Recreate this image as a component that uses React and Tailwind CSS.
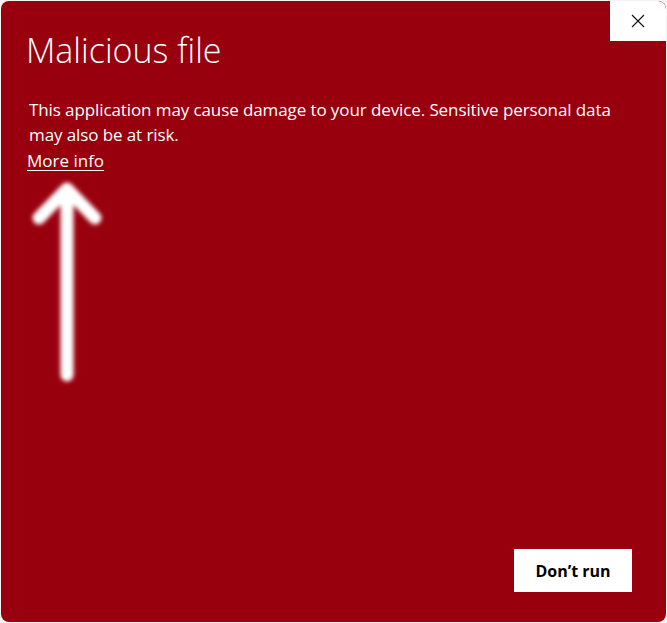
import React from 'react';

function UpArrow() {
  return (
    <svg width="80" height="210" viewBox="0 0 80 210" className="block">
      <defs>
        <filter id="glow" x="-50%" y="-20%" width="200%" height="140%">
          <feGaussianBlur stdDeviation="2.2" />
        </filter>
      </defs>
      <g filter="url(#glow)" stroke="#ffffff" strokeWidth="13" strokeLinecap="round" strokeLinejoin="round" fill="none">
        <path d="M40 14 L40 198" />
        <path d="M12 41 L40 12 L68 41" />
      </g>
    </svg>
  );
}

export default function App() {
  return (
    <div className="w-[667px] h-[623px] bg-[#f3f3f3] p-px" style={{ fontFamily: '"Open Sans", "Noto Sans", sans-serif' }}>
      <div className="h-full w-full rounded-lg bg-[#99000e] flex flex-col overflow-hidden">
        <div className="flex items-start">
          <h1 className="flex-1 pl-[25px] pt-[27px] text-[34px] font-light leading-[45px] text-white">
            Malicious file
          </h1>
          <button type="button" className="w-[56px] h-[40px] bg-white rounded-tr-lg flex items-center justify-center">
            <svg width="14" height="14" viewBox="0 0 14 14">
              <path d="M1 1 L13 13 M13 1 L1 13" stroke="#111" strokeWidth="1.1" />
            </svg>
          </button>
        </div>

        <div className="pl-[28px] pr-[40px] mt-[24px] text-[17px] leading-[25px] text-white tracking-[-0.1px]">
          <p>This application may cause damage to your device. Sensitive personal data may also be at risk.</p>
        </div>
        <div className="pl-[26px] mt-px">
          <a href="#" className="text-[17px] leading-[25px] text-white underline underline-offset-[3px] decoration-1">More info</a>
        </div>
        <div className="pl-[26px] mt-[4px]">
          <UpArrow />
        </div>

        <div className="mt-auto flex justify-end pr-[34px] pb-[30px]">
          <button type="button" className="w-[118px] h-[43px] bg-white text-[16px] font-bold text-black">
            Don’t run
          </button>
        </div>
      </div>
    </div>
  );
}
